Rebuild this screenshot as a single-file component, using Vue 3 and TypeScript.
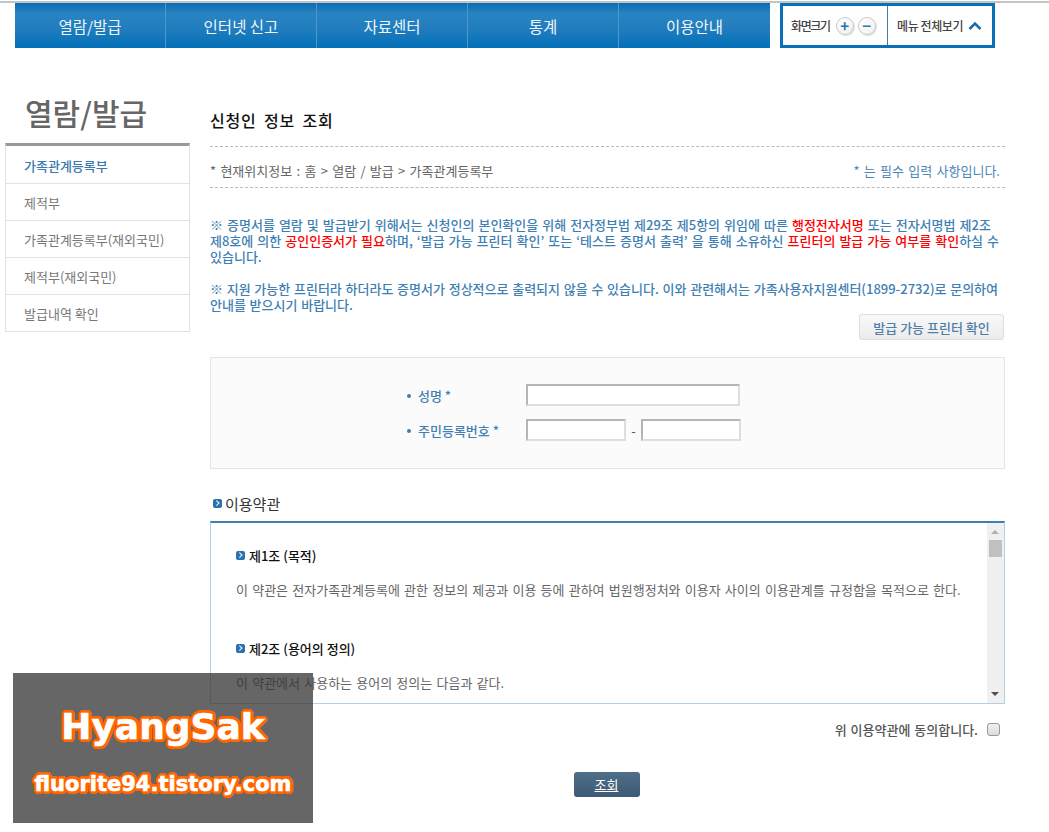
<template>
  <div class="page">
    <div class="top-line"></div>
    <header class="top">
      <nav class="gnb">
        <a v-for="item in gnb" :key="item" class="gnb-item">{{ item }}</a>
      </nav>
      <div class="tools">
        <div class="tool-zoom">
          <span>화면크기</span>
          <i class="round plus">+</i>
          <i class="round minus">−</i>
        </div>
        <div class="tool-menu">
          <span>메뉴 전체보기</span>
          <svg width="14" height="10" viewBox="0 0 14 10"><path d="M1.5 8 7 2.5 12.5 8" fill="none" stroke="#1a6fa8" stroke-width="2.6" /></svg>
        </div>
      </div>
    </header>

    <div class="body">
      <aside class="side">
        <h2 class="side-title">열람/발급</h2>
        <ul class="side-menu">
          <li v-for="(m, i) in sideMenu" :key="m" :class="{ on: i === 0 }">{{ m }}</li>
        </ul>
      </aside>

      <main class="main">
        <h3 class="heading">신청인 정보 조회</h3>
        <div class="location">
          <span>* 현재위치정보 : 홈 &gt; 열람 / 발급 &gt; 가족관계등록부</span>
          <span class="req">* 는 필수 입력 사항입니다.</span>
        </div>

        <p class="notice">
          ※ 증명서를 열람 및 발급받기 위해서는 신청인의 본인확인을 위해 전자정부법 제29조 제5항의 위임에 따른 <b>행정전자서명</b> 또는 전자서명법 제2조<br />
          제8호에 의한 <b>공인인증서가 필요</b>하며, ‘발급 가능 프린터 확인’ 또는 ‘테스트 증명서 출력’ 을 통해 소유하신 <b>프린터의 발급 가능 여부를 확인</b>하실 수<br />
          있습니다.
        </p>
        <p class="notice second">
          ※ 지원 가능한 프린터라 하더라도 증명서가 정상적으로 출력되지 않을 수 있습니다. 이와 관련해서는 가족사용자지원센터(1899-2732)로 문의하여<br />
          안내를 받으시기 바랍니다.
        </p>
        <div class="printer-row">
          <button class="printer-btn" type="button">발급 가능 프린터 확인</button>
        </div>

        <section class="form-box">
          <div class="form-row">
            <label class="form-label">성명 *</label>
            <input class="inp wide" type="text" />
          </div>
          <div class="form-row">
            <label class="form-label">주민등록번호 *</label>
            <input class="inp short" type="text" />
            <span class="dash">-</span>
            <input class="inp short" type="text" />
          </div>
        </section>

        <h4 class="terms-title"><i class="bullet"></i>이용약관</h4>
        <div class="terms">
          <div class="terms-body">
            <template v-for="t in terms" :key="t.title">
              <div class="article"><i class="bullet"></i>{{ t.title }}</div>
              <p class="article-text">{{ t.text }}</p>
            </template>
          </div>
          <div class="scrollbar">
            <i class="arrow up"></i>
            <i class="thumb"></i>
            <i class="arrow down"></i>
          </div>
        </div>

        <div class="agree">
          <span>위 이용약관에 동의합니다.</span>
          <i class="check"></i>
        </div>
        <div class="submit-row">
          <button class="submit" type="button">조회</button>
        </div>
      </main>
    </div>

    <div class="stamp">
      <div class="stamp-name">HyangSak</div>
      <div class="stamp-url">fluorite94.tistory.com</div>
    </div>
  </div>
</template>

<script setup lang="ts">
const gnb: string[] = ['열람/발급', '인터넷 신고', '자료센터', '통계', '이용안내']

const sideMenu: string[] = [
  '가족관계등록부',
  '제적부',
  '가족관계등록부(재외국민)',
  '제적부(재외국민)',
  '발급내역 확인'
]

interface Term {
  title: string
  text: string
}

const terms: Term[] = [
  {
    title: '제1조 (목적)',
    text: '이 약관은 전자가족관계등록에 관한 정보의 제공과 이용 등에 관하여 법원행정처와 이용자 사이의 이용관계를 규정함을 목적으로 한다.'
  },
  {
    title: '제2조 (용어의 정의)',
    text: '이 약관에서 사용하는 용어의 정의는 다음과 같다.'
  }
]
</script>

<style>
html,
body {
  margin: 0;
  background: #fff;
}
</style>

<style scoped>
.page {
  position: relative;
  width: 1049px;
  height: 832px;
  overflow: hidden;
  font-family: "Noto Sans CJK KR", "Noto Sans", sans-serif;
  font-size: 13px;
  color: #666;
}

.top-line {
  height: 2px;
  margin-top: 1px;
  background: #c4c4c4;
}

.top {
  display: flex;
  gap: 10px;
  padding-left: 15px;
  height: 45px;
}

.gnb {
  display: flex;
  width: 755px;
  background: linear-gradient(#0a6db4, #2a84c2 25%, #1f7cbd 60%, #0270b8);
}

.gnb-item {
  flex: none;
  width: 151px;
  box-sizing: border-box;
  display: flex;
  align-items: center;
  justify-content: center;
  color: #eef6fb;
  font-size: 15.5px;
  border-left: 1px solid #4f97cb;
}

.gnb-item:first-child {
  width: 150px;
  border-left: 0;
}

.gnb-item:last-child {
  width: 152px;
}

.tools {
  display: flex;
  width: 215px;
  box-sizing: border-box;
  border: 3px solid #0a70b8;
  color: #444;
  font-size: 12px;
  font-weight: 500;
  letter-spacing: -1.4px;
}

.tool-zoom {
  display: flex;
  align-items: center;
  width: 105px;
  padding-left: 8px;
  gap: 6px;
  box-sizing: border-box;
  border-right: 1px solid #3f7fae;
}

.round {
  display: flex;
  align-items: center;
  justify-content: center;
  width: 16px;
  height: 16px;
  margin-right: -2px;
  border: 1px solid #c9c9c9;
  border-radius: 50%;
  font-style: normal;
  font-size: 15px;
  font-weight: 700;
  letter-spacing: 0;
  color: #1f76b5;
  background: linear-gradient(135deg, #fff, #f0f0f0);
  box-shadow: 1px 1px 1px #ddd;
}

.round.minus {
  color: #3a7ba8;
}

.tool-menu {
  flex: 1;
  display: flex;
  align-items: center;
  padding-left: 9px;
  gap: 5px;
  letter-spacing: -0.4px;
}

.body {
  display: flex;
  padding-left: 5px;
}

.side {
  width: 185px;
  flex: none;
}

.side-title {
  margin: 42px 0 0;
  padding-left: 20px;
  height: 53px;
  line-height: 44px;
  font-size: 30px;
  font-weight: 500;
  color: #666;
}

.side-menu {
  margin: 0;
  padding: 0;
  list-style: none;
  border-top: 3px solid #999;
  border-left: 1px solid #e2e2e2;
  border-right: 1px solid #e2e2e2;
}

.side-menu li {
  height: 37px;
  box-sizing: border-box;
  padding-left: 18px;
  line-height: 38px;
  border-bottom: 1px solid #e2e2e2;
  color: #777;
}

.side-menu li:first-child {
  height: 38px;
  line-height: 39px;
}

.side-menu li.on {
  color: #3a7ab0;
  font-weight: 500;
}

.main {
  width: 795px;
  margin-left: 20px;
}

.heading {
  margin: 0;
  padding-top: 59px;
  height: 39px;
  line-height: 26px;
  font-size: 16px;
  font-weight: 500;
  color: #111;
  word-spacing: 3px;
  letter-spacing: 0.8px;
  border-bottom: 1px dashed #bbb;
}

.location {
  display: flex;
  justify-content: space-between;
  height: 40px;
  padding-right: 5px;
  line-height: 47px;
  border-bottom: 1px dashed #bbb;
  color: #666;
  word-spacing: 1.4px;
}

.req {
  color: #4a86b8;
}

.notice {
  margin: 29px 0 0;
  line-height: 16px;
  color: #3f7fb4;
  font-weight: 500;
  word-spacing: 1.1px;
}

.notice b {
  color: #f00;
  font-weight: 500;
}

.notice.second {
  margin-top: 16px;
  word-spacing: 0.8px;
}

.printer-row {
  display: flex;
  justify-content: flex-end;
  margin-top: 1px;
  padding-right: 1px;
}

.printer-btn {
  width: 145px;
  height: 26px;
  padding: 0;
  border: 1px solid #ddd;
  border-radius: 3px;
  background: linear-gradient(#f8f8f8, #ececec);
  color: #4f7fa8;
  font: 500 13px "Noto Sans CJK KR", sans-serif;
}

.form-box {
  display: flex;
  flex-direction: column;
  gap: 13px;
  height: 112px;
  margin-top: 17px;
  padding-top: 26px;
  box-sizing: border-box;
  background: #fbfbfb;
  border: 1px solid #e5e5e5;
}

.form-row {
  display: flex;
  align-items: center;
  height: 22px;
  padding-left: 196px;
}

.form-label {
  position: relative;
  width: 119px;
  padding-left: 11px;
  box-sizing: border-box;
  color: #3f7fb4;
  font-weight: 500;
}

.form-label::before {
  content: "";
  position: absolute;
  left: 0;
  top: 8px;
  width: 4px;
  height: 4px;
  border-radius: 50%;
  background: #3f7fb4;
}

.inp {
  height: 22px;
  padding: 0;
  box-sizing: border-box;
  background: #fff;
  border: 2px solid #dedede;
  border-top-color: #b5b5b5;
  border-left-color: #b5b5b5;
}

.inp.wide {
  width: 214px;
}

.inp.short {
  width: 100px;
}

.dash {
  width: 15px;
  text-align: center;
  color: #555;
}

.terms-title {
  display: flex;
  align-items: center;
  height: 24px;
  margin: 22px 0 0;
  padding-left: 3px;
  font-size: 15px;
  font-weight: 400;
  color: #333;
}

.bullet {
  position: relative;
  flex: none;
  width: 9px;
  height: 9px;
  margin-right: 3px;
  border-radius: 2px;
  background: #2a72ad;
}

.bullet::after {
  content: "";
  position: absolute;
  left: 2px;
  top: 2.5px;
  width: 2.5px;
  height: 2.5px;
  border-top: 1px solid #fff;
  border-right: 1px solid #fff;
  transform: rotate(45deg);
}

.terms {
  display: flex;
  height: 183px;
  margin-top: 6px;
  box-sizing: border-box;
  border: 1px solid #b5d0e5;
  border-top: 2px solid #3f7fb4;
}

.terms-body {
  flex: 1;
  min-width: 0;
  padding: 23px 0 0 25px;
  overflow: hidden;
}

.article {
  display: flex;
  align-items: center;
  height: 18px;
  margin-bottom: 17px;
  color: #111;
  font-size: 13px;
  font-weight: 500;
}

.article .bullet {
  margin-right: 4px;
}

.article-text {
  margin: 0 0 41px;
  height: 17px;
  line-height: 17px;
  color: #666;
  word-spacing: 1.3px;
  white-space: nowrap;
}

.scrollbar {
  position: relative;
  flex: none;
  width: 17px;
  background: #f0f0f0;
}

.arrow {
  position: absolute;
  left: 4px;
  width: 0;
  height: 0;
  border-left: 4px solid transparent;
  border-right: 4px solid transparent;
}

.arrow.up {
  top: 7px;
  border-bottom: 4px solid #b0b0b0;
}

.arrow.down {
  bottom: 7px;
  border-top: 4px solid #505050;
}

.thumb {
  position: absolute;
  left: 2px;
  top: 17px;
  width: 13px;
  height: 17px;
  background: #c0c0c0;
}

.agree {
  display: flex;
  align-items: center;
  justify-content: flex-end;
  gap: 9px;
  height: 20px;
  margin-top: 15px;
  padding-right: 5px;
  color: #555;
  font-weight: 500;
  word-spacing: 1px;
}

.check {
  width: 13px;
  height: 13px;
  box-sizing: border-box;
  border: 1px solid #999;
  border-radius: 3px;
  background: linear-gradient(#eee, #ddd);
}

.submit-row {
  display: flex;
  justify-content: center;
  margin-top: 33px;
  padding-right: 2px;
}

.submit {
  width: 66px;
  height: 25px;
  padding: 0;
  border: 0;
  border-radius: 3px;
  background: linear-gradient(#4f6e88, #3d5a74);
  color: #fff;
  font: 400 13px "Noto Sans CJK KR", sans-serif;
  text-decoration: underline;
}

/* round outline: a ring of hard shadows, since text-stroke gives sharp corners */
.stamp {
  position: absolute;
  left: 13px;
  top: 673px;
  width: 300px;
  height: 150px;
  background: rgba(51, 51, 51, 0.75);
  font-family: "DejaVu Sans", "Noto Sans", sans-serif;
  font-weight: 700;
  color: #fff;
  text-align: center;
  -webkit-text-stroke: 0.6px #fff;
  text-shadow:
    3px 0 0 #f60, -3px 0 0 #f60, 0 3px 0 #f60, 0 -3px 0 #f60,
    2.1px 2.1px 0 #f60, -2.1px 2.1px 0 #f60, 2.1px -2.1px 0 #f60, -2.1px -2.1px 0 #f60,
    2.8px 1.1px 0 #f60, -2.8px 1.1px 0 #f60, 2.8px -1.1px 0 #f60, -2.8px -1.1px 0 #f60,
    1.1px 2.8px 0 #f60, -1.1px 2.8px 0 #f60, 1.1px -2.8px 0 #f60, -1.1px -2.8px 0 #f60;
}

.stamp-name {
  margin-top: 31px;
  height: 46px;
  line-height: 46px;
  font-size: 36px;
}

.stamp-url {
  margin-top: 19px;
  height: 30px;
  line-height: 30px;
  font-size: 21px;
}
</style>
